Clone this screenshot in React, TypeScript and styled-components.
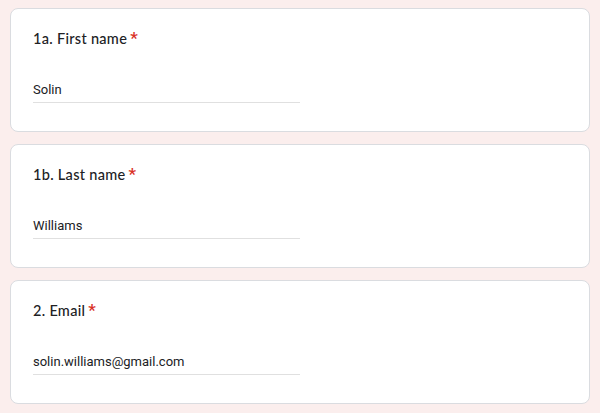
import React from 'react';
import styled, { createGlobalStyle } from 'styled-components';

const GlobalStyle = createGlobalStyle`
  html, body {
    margin: 0;
    padding: 0;
    background: #fbeeed;
  }
`;

const Page = styled.div`
  display: flex;
  flex-direction: column;
  gap: 12px;
  padding: 8px 10px;
  background: #fbeeed;
  min-height: 100vh;
  box-sizing: border-box;
`;

const Card = styled.div`
  background: #ffffff;
  border: 1px solid #dadce0;
  border-radius: 8px;
  padding: 18px 22px 28px;
  display: flex;
  flex-direction: column;
  gap: 29px;
`;

const Title = styled.div`
  font-family: Lato, 'Noto Sans', sans-serif;
  font-size: 14.5px;
  font-weight: 500;
  line-height: 24px;
  letter-spacing: 0.3px;
  color: #202124;
  height: 24px;
`;

const Required = styled.span`
  font-family: Roboto, 'Liberation Sans', sans-serif;
  font-size: 17px;
  font-weight: 500;
  line-height: 0;
  color: #d93025;
  margin-left: 3px;
`;

const Answer = styled.div`
  width: 50%;
  padding-bottom: 2px;
  border-bottom: 1px solid #e0e0e0;
  font-family: Roboto, 'Liberation Sans', sans-serif;
  font-size: 13px;
  line-height: 20px;
  color: #202124;
`;

const questions = [
  { label: '1a. First name', value: 'Solin' },
  { label: '1b. Last name', value: 'Williams' },
  { label: '2. Email', value: 'solin.williams@gmail.com' },
];

export default function App() {
  return (
    <>
      <GlobalStyle />
      <Page>
        {questions.map((q) => (
          <Card key={q.label}>
            <Title>
              {q.label}
              <Required>*</Required>
            </Title>
            <Answer>{q.value}</Answer>
          </Card>
        ))}
      </Page>
    </>
  );
}
